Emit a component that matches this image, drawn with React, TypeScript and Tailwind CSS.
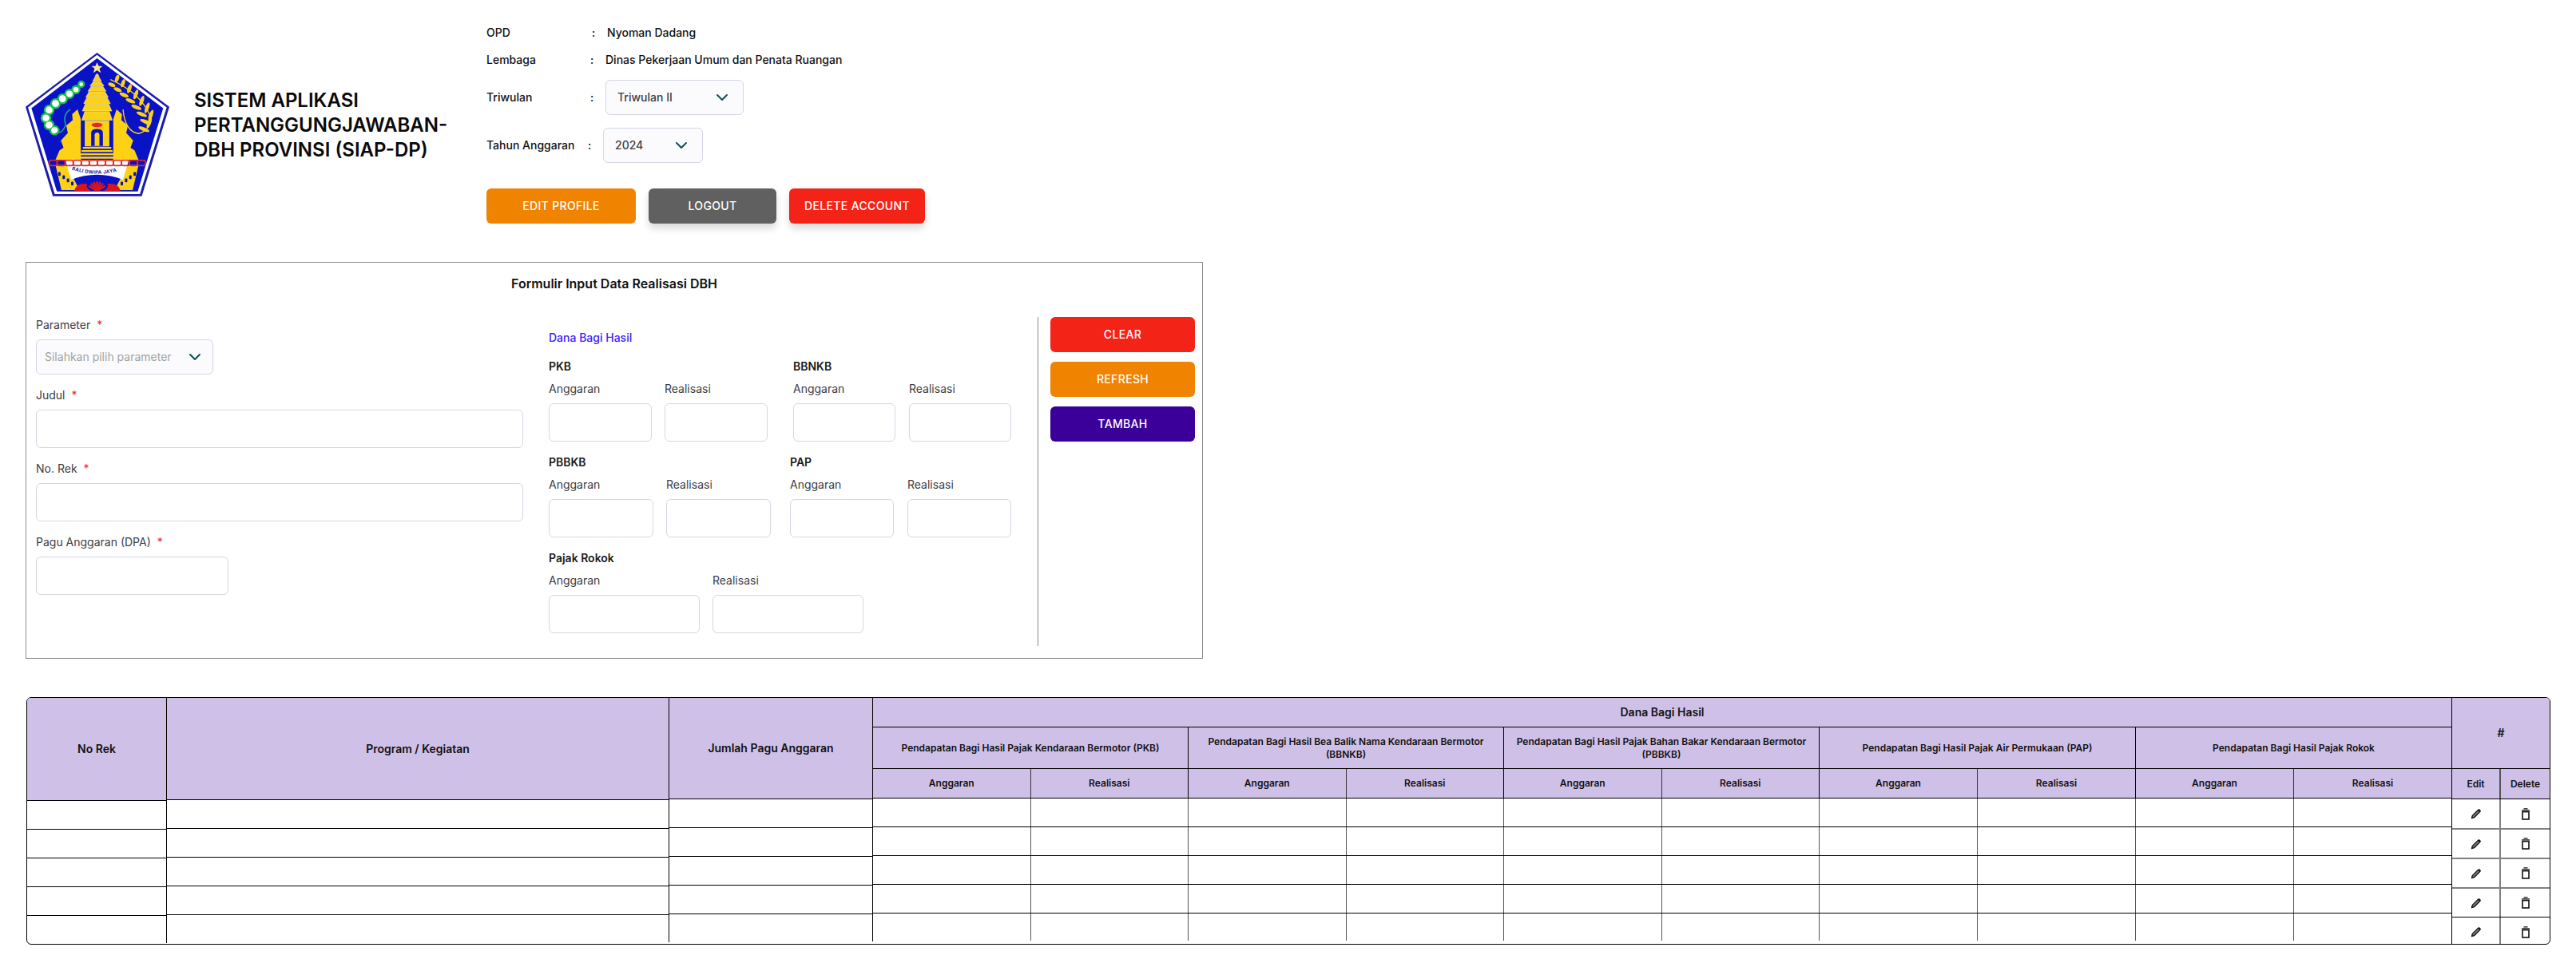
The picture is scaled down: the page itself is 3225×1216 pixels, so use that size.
import { ChevronDown } from "lucide-react";

const GROUPS = [
  { title: "Pendapatan Bagi Hasil Pajak Kendaraan Bermotor (PKB)", width: "w-[395px]" },
  { title: "Pendapatan Bagi Hasil Bea Balik Nama Kendaraan Bermotor (BBNKB)", width: "w-[395px]" },
  { title: "Pendapatan Bagi Hasil Pajak Bahan Bakar Kendaraan Bermotor (PBBKB)", width: "w-[395px]" },
  { title: "Pendapatan Bagi Hasil Pajak Air Permukaan (PAP)", width: "w-[396px]" },
  { title: "Pendapatan Bagi Hasil Pajak Rokok", width: "w-[395px]" },
];

const ROWS = [0, 1, 2, 3, 4];

// logo geometry, in the units of the svg viewBox
const BEADS = [
  [246, 168, 7], [226, 188, 10], [202, 204, 12], [176, 222, 13], [150, 240, 13], [126, 264, 13],
  [114, 294, 13], [126, 320, 13], [146, 340, 12],
];
const LEAVES = [
  [372, 160, 28], [394, 178, 32], [418, 198, 36], [442, 220, 38], [464, 244, 40], [484, 270, 42], [498, 298, 44], [492, 326, 44],
];
const TIERS = [
  [130, 142, 3, 8], [142, 158, 8, 16], [158, 176, 14, 26], [176, 196, 22, 34], [196, 218, 30, 42], [218, 242, 38, 50], [242, 270, 44, 55], [270, 304, 46, 57],
];
const LINKS = [126, 156, 186, 216, 246, 276, 306, 336, 366, 396, 426, 456];
const RAYS = [-60, -40, -20, 0, 20, 40, 60];

function BaliLogo() {
  const gold = "#fcd116";
  const blue = "#0a12c6";
  return (
    <svg viewBox="38 50 537 537" className="h-[180px] w-[180px] shrink-0">
      <polygon points="305,50 575,252 472,586 140,586 38,252" fill="#1c1ca8" />
      <polygon points="305,58 565,254 465,578 147,578 47,254" fill="#fff" />
      <polygon points="305,71 552,257 457,568 155,568 60,257" fill={blue} />
      <polygon points="305,86 311,100 326,100 314,110 319,125 305,116 291,125 296,110 284,100 299,100" fill="#fde98a" />
      {/* beads */}
      {BEADS.map(([x, y, r]) => (
        <circle key={`${x}-${y}`} cx={x} cy={y} r={r + 7} fill="#18c04c" />
      ))}
      {BEADS.map(([x, y, r]) => (
        <circle key={`w${x}-${y}`} cx={x} cy={y} r={r} fill="#fff" />
      ))}
      <path d="M205 262 Q176 280 188 320 Q176 352 150 352" fill="none" stroke="#17a08a" strokeWidth="5" />
      {/* rice */}
      <path d="M355 150 Q470 200 505 290 Q505 340 460 352 Q410 345 402 262" fill="none" stroke={gold} strokeWidth="4" />
      {LEAVES.map(([x, y, l]) => (
        <g key={`${x}-${y}`} fill={gold}>
          <ellipse cx={x + 8} cy={y - 14} rx={l / 2} ry="7" transform={`rotate(-70 ${x + 8} ${y - 14})`} />
          <ellipse cx={x - 12} cy={y + 10} rx={l / 2} ry="7" transform={`rotate(22 ${x - 12} ${y + 10})`} />
        </g>
      ))}
      {/* candi bentar */}
      <g fill={gold}>
        <path d="M232 262 L245 300 V450 H150 L165 415 L180 405 L170 378 L196 350 L190 322 L214 302 L212 280 Z" />
        <path d="M378 262 L365 300 V450 H460 L445 415 L430 405 L440 378 L414 350 L420 322 L396 302 L398 280 Z" />
      </g>
      <rect x="245" y="265" width="120" height="190" fill={blue} />
      {/* meru */}
      {TIERS.map(([top, bottom, a, b]) => (
        <polygon
          key={top}
          points={`${305 - a},${top} ${305 + a},${top} ${305 + b},${bottom - 2} ${305 - b},${bottom - 2}`}
          fill={gold}
          stroke="#fff"
          strokeWidth="1.5"
        />
      ))}
      <rect x="259" y="304" width="92" height="96" fill={gold} />
      <path d="M283 398 V350 Q283 335 305 335 Q327 335 327 350 V398 Z" fill={blue} />
      <path d="M296 398 V358 Q296 348 305 348 Q314 348 314 358 V398 Z" fill={gold} />
      <ellipse cx="305" cy="320" rx="20" ry="8" fill="#e8262a" />
      <rect x="252" y="402" width="106" height="7" fill={gold} />
      <rect x="247" y="414" width="116" height="7" fill={gold} />
      <rect x="243" y="426" width="124" height="7" fill={gold} />
      <rect x="238" y="438" width="134" height="8" fill={gold} />
      {/* feet */}
      <path d="M150 470 H200 L212 510 L240 563 H172 Z" fill={gold} />
      <path d="M460 470 H410 L398 510 L370 563 H438 Z" fill={gold} />
      {[162, 178, 194, 210].map((x, i) => (
        <g key={x} fill="#0a12a0">
          <rect x={x - 2} y={496 + i * 12} width="9" height="14" rx="3" />
          <rect x={610 - x - 7} y={496 + i * 12} width="9" height="14" rx="3" />
        </g>
      ))}
      {/* banner */}
      <path d="M186 450 H424 L402 524 Q305 488 208 524 Z" fill="#fff" />
      <path id="logoBanner" d="M198 482 Q305 524 416 482" fill="none" />
      <text fontFamily="Inter, sans-serif" fontSize="18" fontWeight="700" fill="#1c1ca8" letterSpacing="1">
        <textPath href="#logoBanner" startOffset="6%">BALI DWIPA JAYA</textPath>
      </text>
      {/* chain */}
      {LINKS.map((x) => (
        <rect key={x} x={x} y="452" width="30" height="20" rx="7" fill="none" stroke="#e02a2a" strokeWidth="5" />
      ))}
      {/* lotus */}
      {RAYS.map((a) => (
        <rect key={a} x="301" y="530" width="8" height="34" rx="3" fill="#d8141f" transform={`rotate(${a} 305 566)`} />
      ))}
      <path d="M220 566 Q226 536 268 540 Q262 556 282 566 Z" fill="#d8141f" />
      <path d="M392 566 Q386 536 344 540 Q350 556 330 566 Z" fill="#d8141f" />
    </svg>
  );
}

function EditIcon() {
  return (
    <svg viewBox="0 0 14 14" className="h-3.5 w-3.5">
      <path d="M1.5 12.5 L2.3 9.4 L9.6 2.1 L11.9 4.4 L4.6 11.7 Z" fill="#777" stroke="#111" strokeWidth="1.3" strokeLinejoin="round" />
      <path d="M9.6 2.1 L10.8 0.9 L13.1 3.2 L11.9 4.4 Z" fill="#111" />
    </svg>
  );
}

function TrashIcon() {
  return (
    <svg viewBox="0 0 12 15" className="h-[15px] w-3">
      <path d="M3.5 0.9 H8.5" stroke="#111" strokeWidth="1.4" />
      <path d="M1 2.9 H11" stroke="#111" strokeWidth="1.4" />
      <rect x="2" y="4.6" width="8" height="9.4" fill="none" stroke="#111" strokeWidth="1.6" />
    </svg>
  );
}

function Select({ label, className, muted }: { label: string; className: string; muted?: boolean }) {
  return (
    <div className={`flex items-center justify-between rounded-md border border-[#d6d6e6] bg-[#fbfbfd] ${className}`}>
      <span className={`text-sm ${muted ? "text-[#a3a3a3]" : "text-[#3d3d45]"}`}>{label}</span>
      <ChevronDown className="h-6 w-6 text-[#134e56]" strokeWidth={2} />
    </div>
  );
}

function Field({ label, className }: { label: string; className: string }) {
  return (
    <div className={`flex flex-col ${className}`}>
      <span className="h-5 text-sm leading-5 text-[#3d3d45]">{label}</span>
      <div className="mt-2 h-12 rounded-md border border-[#d6d6e6] bg-white" />
    </div>
  );
}

function Pair({ title, gap, fieldWidth }: { title: string; gap: string; fieldWidth: string }) {
  return (
    <div>
      <p className="h-5 text-sm font-semibold leading-5 text-[#1a1a1a]">{title}</p>
      <div className={`mt-2 flex ${gap}`}>
        <Field label="Anggaran" className={fieldWidth} />
        <Field label="Realisasi" className={fieldWidth} />
      </div>
    </div>
  );
}

function Required({ label }: { label: string }) {
  return (
    <p className="h-5 text-sm leading-5 text-[#3d3d45]">
      {label}
      <span className="ml-2 text-[#f42318]">*</span>
    </p>
  );
}

function BodyColumn({ header, width, headerHeight }: { header: string; width: string; headerHeight: string }) {
  return (
    <div className={`${width} shrink-0 border-r border-black`}>
      <div className={`${headerHeight} flex items-center justify-center bg-[#cfc0e8] text-sm font-semibold text-[#111]`}>{header}</div>
      {ROWS.map((r) => (
        <div key={r} className={`border-t border-black ${r === 4 ? "h-[35px]" : "h-9"}`} />
      ))}
    </div>
  );
}

function Group({ title, width, last }: { title: string; width: string; last?: boolean }) {
  const border = last ? "" : "border-r border-black";
  return (
    <div className={`${width} shrink-0`}>
      <div className={`flex h-[52px] items-center justify-center border-b border-black bg-[#cfc0e8] px-2.5 text-center text-xs font-semibold leading-4 text-[#111] ${border}`}>
        {title}
      </div>
      <div className={`flex h-9 bg-[#cfc0e8] text-xs font-semibold text-[#111] ${border}`}>
        <div className="flex flex-1 items-center justify-center border-r border-[#333]">Anggaran</div>
        <div className="flex flex-1 items-center justify-center">Realisasi</div>
      </div>
      {ROWS.map((r) => (
        <div key={r} className={`flex border-t border-black ${r === 4 ? "h-[35px]" : "h-9"}`}>
          <div className="flex-1 border-r border-[#555]" />
          <div className={`flex-1 ${last ? "" : "border-r border-[#555]"}`} />
        </div>
      ))}
    </div>
  );
}

export default function App() {
  return (
    <div className="min-h-[1216px] bg-white px-8 pt-[31px] font-['Inter',sans-serif] text-[#111]">
      {/* Header */}
      <div className="flex items-start">
        <div className="mt-[35px] flex w-[577px] items-center gap-[31px]">
          <BaliLogo />
          <h1 className="w-[330px] text-2xl font-semibold leading-[31px] text-[#0a0a0a]">
            SISTEM APLIKASI PERTANGGUNGJAWABAN-DBH PROVINSI (SIAP-DP)
          </h1>
        </div>

        <div className="flex flex-col text-sm font-medium">
          <div className="flex h-5 items-center">
            <span className="w-[132px]">OPD</span>
            <span className="w-[19px]">:</span>
            <span>Nyoman Dadang</span>
          </div>
          <div className="mt-3.5 flex h-5 items-center">
            <span className="w-[130px]">Lembaga</span>
            <span className="w-[19px]">:</span>
            <span>Dinas Pekerjaan Umum dan Penata Ruangan</span>
          </div>
          <div className="mt-[15px] flex items-center">
            <span className="w-[130px]">Triwulan</span>
            <span className="w-[19px]">:</span>
            <Select label="Triwulan II" className="h-11 w-[173px] pl-[14px] pr-3.5" />
          </div>
          <div className="mt-4 flex items-center">
            <span className="w-[127px]">Tahun Anggaran</span>
            <span className="w-[19px]">:</span>
            <Select label="2024" className="h-11 w-[125px] pl-[14px] pr-3.5" />
          </div>
          <div className="mt-8 flex gap-4 text-sm font-medium tracking-wide text-white">
            <button className="h-11 w-[187px] rounded-md bg-[#f08300]">EDIT PROFILE</button>
            <button className="h-11 w-[160px] rounded-md bg-[#606060] shadow-[0_6px_10px_rgba(0,0,0,0.15)]">LOGOUT</button>
            <button className="h-11 w-[170px] rounded-md bg-[#f42318] shadow-[0_6px_10px_rgba(0,0,0,0.15)]">DELETE ACCOUNT</button>
          </div>
        </div>
      </div>

      {/* Form */}
      <div className="mt-12 h-[497px] w-[1474px] border border-[#8c8c8c] px-3">
        <h2 className="mt-4 h-5 text-center text-base font-semibold leading-5">Formulir Input Data Realisasi DBH</h2>
        <div className="mt-8 flex">
          <div className="w-[610px] shrink-0">
            <Required label="Parameter" />
            <div className="mt-2 w-[222px]">
              <Select label="Silahkan pilih parameter" className="h-11 pl-2.5 pr-2.5" muted />
            </div>
            <div className="mt-4">
              <Required label="Judul" />
            </div>
            <div className="mt-2 h-12 rounded-md border border-[#d6d6e6]" />
            <div className="mt-4">
              <Required label="No. Rek" />
            </div>
            <div className="mt-2 h-12 rounded-md border border-[#d6d6e6]" />
            <div className="mt-4">
              <Required label="Pagu Anggaran (DPA)" />
            </div>
            <div className="mt-2 h-12 w-[241px] rounded-md border border-[#d6d6e6]" />
          </div>

          <div className="ml-8 w-[579px] shrink-0 pt-4">
            <p className="h-5 text-sm font-medium leading-5 text-[#3a22ff]">Dana Bagi Hasil</p>
            <div className="mt-4 flex justify-between">
              <Pair title="PKB" gap="gap-4" fieldWidth="w-[129px]" />
              <Pair title="BBNKB" gap="gap-[17px]" fieldWidth="w-[128px]" />
            </div>
            <div className="mt-4 flex justify-between">
              <Pair title="PBBKB" gap="gap-4" fieldWidth="w-[131px]" />
              <Pair title="PAP" gap="gap-[17px]" fieldWidth="w-[130px]" />
            </div>
            <div className="mt-4">
              <Pair title="Pajak Rokok" gap="gap-4" fieldWidth="w-[189px]" />
            </div>
          </div>

          <div className="ml-[33px] h-[412px] border-l border-[#8c8c8c] pl-[15px]">
            <div className="flex w-[181px] flex-col gap-3 text-sm font-medium tracking-wide text-white">
              <button className="h-11 rounded-md bg-[#f42318]">CLEAR</button>
              <button className="h-11 rounded-md bg-[#f08300]">REFRESH</button>
              <button className="h-11 rounded-md bg-[#3a0099]">TAMBAH</button>
            </div>
          </div>
        </div>
      </div>

      {/* Table */}
      <div className="ml-px mt-12 flex h-[310px] w-[3160px] items-start overflow-hidden rounded-md border border-black">
        <BodyColumn header="No Rek" width="w-[175px]" headerHeight="h-[128px]" />
        <BodyColumn header="Program / Kegiatan" width="w-[629px]" headerHeight="h-[127px]" />
        <BodyColumn header="Jumlah Pagu Anggaran" width="w-[255px]" headerHeight="h-[126px]" />

        <div className="w-[1976px] shrink-0">
          <div className="flex h-[37px] items-center justify-center border-b border-black bg-[#cfc0e8] text-sm font-semibold">Dana Bagi Hasil</div>
          <div className="flex">
            {GROUPS.map((g, i) => (
              <Group key={g.title} title={g.title} width={g.width} last={i === GROUPS.length - 1} />
            ))}
          </div>
        </div>

        <div className="h-full w-[123px] shrink-0 border-l border-black">
          <div className="flex h-[89px] items-center justify-center border-b border-black bg-[#cfc0e8] text-sm font-semibold">#</div>
          <div className="flex h-[37px] bg-[#cfc0e8] text-xs font-semibold">
            <div className="flex w-[61px] items-center justify-center border-r-2 border-[#555]">Edit</div>
            <div className="flex flex-1 items-center justify-center">Delete</div>
          </div>
          {ROWS.map((r) => (
            <div key={r} className={`flex h-[37px] ${r === 0 || r === 4 ? "border-t border-black" : "border-t-2 border-[#808080]"}`}>
              <div className="flex w-[61px] items-center justify-center border-r-2 border-[#808080]">
                <EditIcon />
              </div>
              <div className="flex flex-1 items-center justify-center">
                <TrashIcon />
              </div>
            </div>
          ))}
        </div>
      </div>
    </div>
  );
}
